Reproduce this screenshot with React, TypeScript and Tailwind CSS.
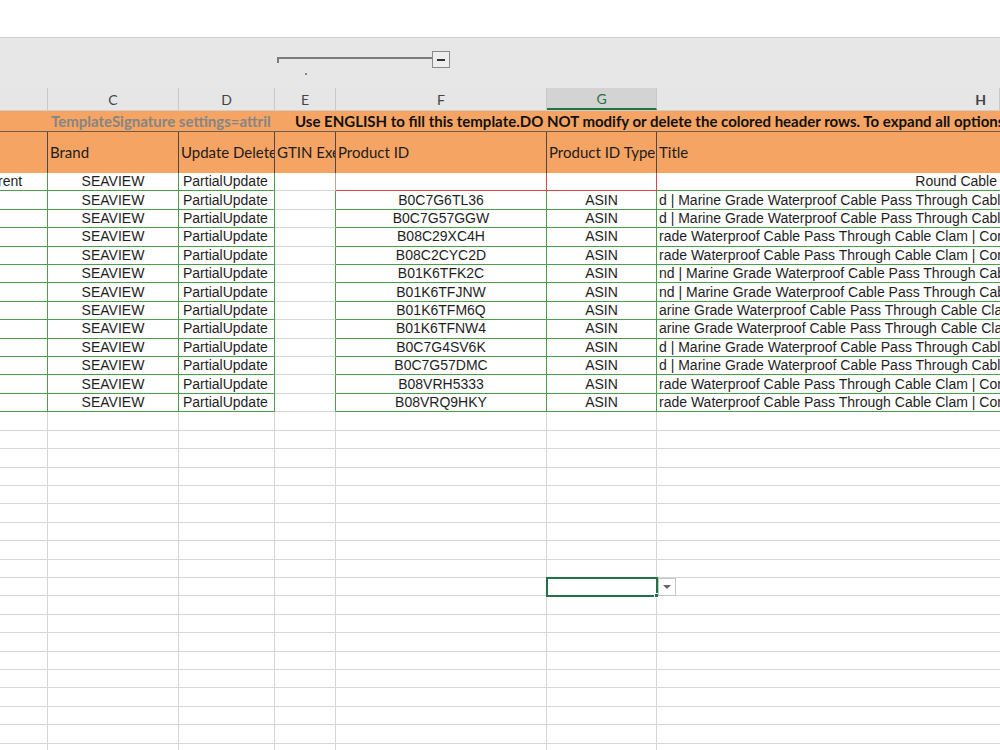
import React from 'react';

const COLS = ['w-[48px]', 'w-[131px]', 'w-[96px]', 'w-[61px]', 'w-[211px]', 'w-[110px]', 'w-[343px]'];
const LETTERS = ['', 'C', 'D', 'E', 'F', 'G', 'H'];
const GREEN = 'border-[#4b9e4b]';
const GRID = 'border-[#d6d6d6]';
const RED = 'border-[#d8454b]';

const rows = [
   { id: 'B0C7G6TL36', title: 'd | Marine Grade Waterproof Cable Pass Through Cable' },
   { id: 'B0C7G57GGW', title: 'd | Marine Grade Waterproof Cable Pass Through Cable' },
   { id: 'B08C29XC4H', title: 'rade Waterproof Cable Pass Through Cable Clam | Cor' },
   { id: 'B08C2CYC2D', title: 'rade Waterproof Cable Pass Through Cable Clam | Cor' },
   { id: 'B01K6TFK2C', title: 'nd | Marine Grade Waterproof Cable Pass Through Cabl' },
   { id: 'B01K6TFJNW', title: 'nd | Marine Grade Waterproof Cable Pass Through Cabl' },
   { id: 'B01K6TFM6Q', title: 'arine Grade Waterproof Cable Pass Through Cable Clar' },
   { id: 'B01K6TFNW4', title: 'arine Grade Waterproof Cable Pass Through Cable Clar' },
   { id: 'B0C7G4SV6K', title: 'd | Marine Grade Waterproof Cable Pass Through Cable' },
   { id: 'B0C7G57DMC', title: 'd | Marine Grade Waterproof Cable Pass Through Cable' },
   { id: 'B08VRH5333', title: 'rade Waterproof Cable Pass Through Cable Clam | Cor' },
   { id: 'B08VRQ9HKY', title: 'rade Waterproof Cable Pass Through Cable Clam | Cor' },
];

const Cell = ({ w, className = '', children }: { w: number; className?: string; children?: React.ReactNode }) => (
   <div className={`${COLS[w]} shrink-0 h-full overflow-hidden whitespace-nowrap flex items-center border-r border-b ${className}`}>{children}</div>
);

const ColumnHeaders = () => (
   <div className="flex h-[23px] bg-[#e6e6e6] border-b border-[#cfcfcf] text-[14px] text-[#444]" style={{ fontFamily: 'Lato, sans-serif' }}>
      {LETTERS.map((l, i) => (
         <div
            key={i}
            className={`${COLS[i]} shrink-0 h-full flex items-center border-r border-[#c8c8c8] ${
               i === 6 ? 'justify-end pr-[13px] font-bold' : 'justify-center'
            } ${i === 5 ? 'bg-[#d3d3d3] text-[#217346] border-b-2 border-b-[#217346]' : ''}`}
         >
            {l}
         </div>
      ))}
   </div>
);

const Toolbar = () => (
   <div className="relative h-[51px] bg-[#e7e7e7] border-t border-[#d2d2d2]">
      <div className="absolute left-[277px] top-[19px] w-[156px] h-[2px] bg-[#7b7b7b]" />
      <div className="absolute left-[277px] top-[19px] w-[2px] h-[6px] bg-[#7b7b7b]" />
      <div className="absolute left-[432px] top-[13px] w-[18px] h-[17px] border border-[#8a8a8a] bg-[#eeeeee] flex items-center justify-center">
         <div className="w-[8px] h-[2px] bg-[#333]" />
      </div>
      <div className="absolute left-[305px] top-[35px] w-[2px] h-[2px] bg-[#888]" />
   </div>
);

const OrangeHeader = () => (
   <div style={{ fontFamily: 'Lato, sans-serif' }} className="bg-[#f6a463]">
      <div className="flex items-center h-[21px] border-b border-[#6d5b4c] text-[15px] font-bold whitespace-nowrap overflow-hidden">
         <div className="w-[275px] shrink-0 pl-[51px] overflow-hidden text-[#858585]">TemplateSignature settings=attril</div>
         <div className="pl-[20px] text-[#111]">
            Use ENGLISH to fill this template.DO NOT modify or delete the colored header rows. To expand all options
         </div>
      </div>
      <div className="flex h-[41px] text-[15px] text-[#1c1c1c]">
         {['', 'Brand', 'Update Delete', 'GTIN Exemption', 'Product ID', 'Product ID Type', 'Title'].map((t, i) => (
            <div key={i} className={`${COLS[i]} shrink-0 h-full overflow-hidden whitespace-nowrap flex items-center pl-[2px] ${i < 6 ? 'border-r border-[#4a4a4a]' : ''}`}>
               {t}
            </div>
         ))}
      </div>
   </div>
);

const DataRows = () => (
   <div className="text-[14px] text-[#1e1e1e]" style={{ fontFamily: '"Liberation Sans", Arial, sans-serif' }}>
      <div className="flex h-[18.42px]">
         <Cell w={0} className={GREEN}>
            <span className="-ml-[2px]">rent</span>
         </Cell>
         <Cell w={1} className={`${GREEN} justify-center`}>SEAVIEW</Cell>
         <Cell w={2} className={`${GREEN} pl-[4px]`}>PartialUpdate</Cell>
         <Cell w={3} className={`${GRID} border-r-[#c9a0a0]`} />
         <Cell w={4} className={RED} />
         <Cell w={5} className={RED} />
         <Cell w={6} className={`${GREEN} border-r-0 justify-end pr-[3px]`}>Round Cable</Cell>
      </div>
      {rows.map((r) => (
         <div key={r.id} className="flex h-[18.42px]">
            <Cell w={0} className={GREEN} />
            <Cell w={1} className={`${GREEN} justify-center`}>SEAVIEW</Cell>
            <Cell w={2} className={`${GREEN} pl-[4px]`}>PartialUpdate</Cell>
            <Cell w={3} className={`${GRID} border-r-[#4b9e4b]`} />
            <Cell w={4} className={`${GREEN} justify-center`}>{r.id}</Cell>
            <Cell w={5} className={`${GREEN} justify-center`}>ASIN</Cell>
            <Cell w={6} className={`${GREEN} border-r-0 pl-[2px]`}>{r.title}</Cell>
         </div>
      ))}
      {Array.from({ length: 19 }).map((_, n) => (
         <div key={n} className="flex h-[18.42px]">
            {COLS.map((_, i) =>
               n === 9 && i === 5 ? (
                  <div key={i} className={`${COLS[i]} shrink-0 h-full relative border-r border-b ${GRID}`}>
                     <div className="absolute -left-[1px] -top-[1px] w-[112px] h-[20px] border-2 border-[#217346]" />
                     <div className="absolute right-[-3px] bottom-[-3px] w-[5px] h-[5px] bg-[#217346] border border-white" />
                     <div className="absolute left-[111px] top-[0px] w-[18px] h-[18px] bg-white border border-[#c4c4c4] flex items-center justify-center">
                        <div className="w-0 h-0 border-l-[4px] border-r-[4px] border-t-[4px] border-l-transparent border-r-transparent border-t-[#666]" />
                     </div>
                  </div>
               ) : (
                  <div key={i} className={`${COLS[i]} shrink-0 h-full border-b ${GRID} ${i < 6 ? 'border-r' : ''}`} />
               )
            )}
         </div>
      ))}
   </div>
);

export default function App() {
   return (
      <div className="w-[1000px] h-[750px] overflow-hidden bg-white">
         <div className="h-[37px] bg-white" />
         <Toolbar />
         <ColumnHeaders />
         <OrangeHeader />
         <DataRows />
      </div>
   );
}
